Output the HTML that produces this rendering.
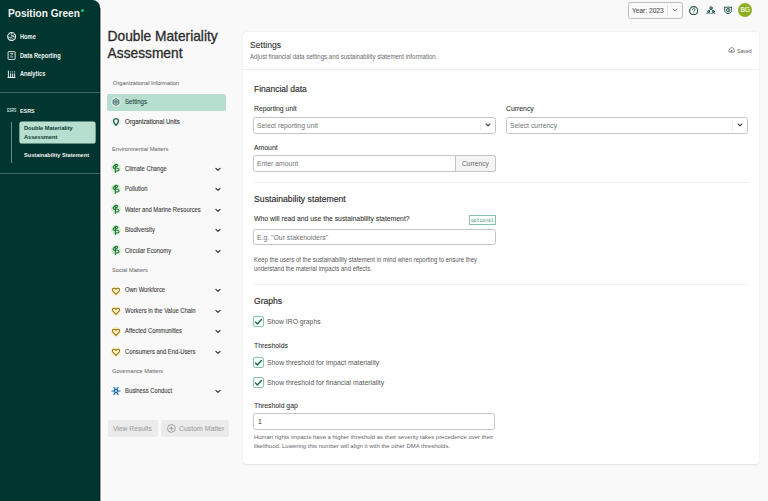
<!DOCTYPE html>
<html><head><meta charset="utf-8"><title>Double Materiality Assessment</title>
<style>
html,body{margin:0;padding:0;}
body{width:768px;height:501px;overflow:hidden;background:#f9f9f9;position:relative;font-family:"Liberation Sans", sans-serif;}
.t{position:absolute;line-height:1;white-space:nowrap;}
.r{position:absolute;display:block;}
</style></head><body>
<div class="r" style="left:0.00px;top:0.00px;width:102.20px;height:501.00px;background:#ffffff;border-top-right-radius:9px;"></div>
<div class="r" style="left:0.00px;top:0.00px;width:100.00px;height:501.00px;background:#01352f;border-top-right-radius:7.5px;"></div>
<div class="r" style="left:99.40px;top:7.50px;width:0.60px;height:493.50px;background:#00251f;"></div>
<div class="r" style="left:100.00px;top:7.50px;width:1.30px;height:493.50px;background:linear-gradient(90deg,#1f4a45,#ffffff);"></div>
<div class="t" style="left:7.80px;top:8.07px;font-size:10.899px;color:#f4f6f5;font-weight:bold;transform:scaleX(0.9285);transform-origin:0 0;">Position Green</div>
<div class="r" style="left:81px;top:8.8px;width:3px;height:3px;border-radius:50%;background:#10c07c"></div>
<svg class="r" style="left:6.90px;top:31.80px;width:9.2px;height:9.2px" viewBox="0 0 9.2 9.2"><g fill="none" stroke="#e6ecea" stroke-linecap="round"><circle cx="4.6" cy="4.6" r="4.0" stroke-width="1.05"/><path d="M5.2 1.0 C3.6 1.8 3.6 3.6 5.0 3.7 C5.8 3.8 6.4 3.2 7.4 2.6" stroke-width="1.0"/><path d="M1.0 4.6 C2.2 5.8 3.6 6.0 4.6 5.2 C5.6 4.4 6.6 4.4 8.0 5.0" stroke-width="1.0"/><path d="M2.8 7.2 C3.6 6.6 4.4 7.4 5.0 6.9 C5.6 6.4 6.2 6.8 6.6 7.2" stroke-width="0.75"/></g></svg>
<div class="t" style="left:20.00px;top:33.90px;font-size:6.384px;color:#eef2f1;font-weight:bold;transform:scaleX(0.8929);transform-origin:0 0;">Home</div>
<svg class="r" style="left:7.00px;top:50.80px;width:9px;height:9px" viewBox="0 0 9 9"><rect x="1.1" y="0.6" width="7" height="8" rx="0.6" fill="none" stroke="#e8eeec" stroke-width="0.95"/><path d="M3.2 2.6 H6 L4 4.6 V6.8 M5.6 5.4 V6.8" fill="none" stroke="#e8eeec" stroke-width="0.8"/></svg>
<div class="t" style="left:20.00px;top:52.50px;font-size:6.384px;color:#eef2f1;font-weight:bold;transform:scaleX(0.8929);transform-origin:0 0;">Data Reporting</div>
<svg class="r" style="left:7.00px;top:69.60px;width:9px;height:8px" viewBox="0 0 9 8"><path d="M0.5 7.5 H8.5 M1.4 0.6 V7 M3.6 3.4 V7 M5.6 3.4 V7 M7.6 3.4 V7 M3.6 1.4 V2.4 M5.6 1.4 V2.4 M7.6 1.4 V2.4" fill="none" stroke="#e8eeec" stroke-width="1"/></svg>
<div class="t" style="left:20.00px;top:71.20px;font-size:6.384px;color:#eef2f1;font-weight:bold;transform:scaleX(0.8929);transform-origin:0 0;">Analytics</div>
<div class="r" style="left:0.00px;top:92.00px;width:100.30px;height:0.90px;background:#3f6762;"></div>
<div class="t" style="left:6.80px;top:107.71px;font-size:5.900px;color:#dfe7e5;font-weight:normal;-webkit-text-stroke:0.1px #dfe7e5;transform:scaleX(0.58);transform-origin:0 0;">ESRS</div>
<div class="t" style="left:20.00px;top:108.18px;font-size:6.048px;color:#eef2f1;font-weight:bold;transform:scaleX(0.8929);transform-origin:0 0;">ESRS</div>
<div class="r" style="left:11.00px;top:121.50px;width:1.00px;height:41.00px;background:#6a8a86;"></div>
<div class="r" style="left:20.40px;top:122.00px;width:74.50px;height:21.40px;background:#b7dfd0;border-radius:2px;box-shadow:0 0 0 0.6px #c3e9da;"></div>
<div class="t" style="left:24.00px;top:124.82px;font-size:6.237px;color:#0f3a34;font-weight:bold;transform:scaleX(0.9091);transform-origin:0 0;">Double Materiality</div>
<div class="t" style="left:24.00px;top:133.82px;font-size:6.237px;color:#0f3a34;font-weight:bold;transform:scaleX(0.9091);transform-origin:0 0;">Assessment</div>
<div class="t" style="left:24.00px;top:151.89px;font-size:6.160px;color:#eef2f1;font-weight:bold;transform:scaleX(0.9091);transform-origin:0 0;">Sustainability Statement</div>
<div class="r" style="left:0.00px;top:172.90px;width:100.30px;height:0.90px;background:#3f6762;"></div>
<div class="t" style="left:107.60px;top:29.96px;font-size:13.750px;color:#2b2b2b;font-weight:normal;-webkit-text-stroke:0.3px #2b2b2b;">Double Materiality</div>
<div class="t" style="left:107.60px;top:46.96px;font-size:13.750px;color:#2b2b2b;font-weight:normal;-webkit-text-stroke:0.3px #2b2b2b;">Assessment</div>
<div class="t" style="left:112.60px;top:79.53px;font-size:6.102px;color:#7b7b7b;font-weight:normal;-webkit-text-stroke:0.1px #7b7b7b;transform:scaleX(0.9259);transform-origin:0 0;">Organizational Information</div>
<div class="r" style="left:107.40px;top:94.00px;width:118.50px;height:16.70px;background:#b7dfd0;border-radius:2px;"></div>
<svg class="r" style="left:110.70px;top:97.30px;width:10px;height:10px" viewBox="0 0 10 10"><circle cx="5" cy="5" r="4.9" fill="#d3ede3"/><g fill="none" stroke="#1b4640" stroke-width="0.85" stroke-linejoin="round"><path d="M5.00 1.60 L6.35 2.66 L7.94 3.30 L7.70 5.00 L7.94 6.70 L6.35 7.34 L5.00 8.40 L3.65 7.34 L2.06 6.70 L2.30 5.00 L2.06 3.30 L3.65 2.66 Z"/><circle cx="5" cy="5" r="1.25"/></g></svg>
<div class="t" style="left:124.50px;top:99.38px;font-size:6.405px;color:#21433c;font-weight:normal;-webkit-text-stroke:0.08px #21433c;transform:scaleX(0.9524);transform-origin:0 0;">Settings</div>
<svg class="r" style="left:110.70px;top:117.30px;width:10px;height:10px" viewBox="0 0 10 10"><circle cx="5" cy="5" r="4.9" fill="#e0f1ea"/><path d="M5 8.3 C4.2 7.4 2.5 5.6 2.5 4.1 C2.5 2.6 3.6 1.7 5 1.7 C6.4 1.7 7.5 2.6 7.5 4.1 C7.5 5.6 5.8 7.4 5 8.3 Z" fill="none" stroke="#1b4640" stroke-width="1.1" stroke-linejoin="round"/></svg>
<div class="t" style="left:124.50px;top:119.48px;font-size:6.405px;color:#3a3a3a;font-weight:normal;-webkit-text-stroke:0.13px #3a3a3a;transform:scaleX(0.9524);transform-origin:0 0;">Organizational Units</div>
<div class="t" style="left:112.40px;top:146.23px;font-size:6.102px;color:#7b7b7b;font-weight:normal;-webkit-text-stroke:0.1px #7b7b7b;transform:scaleX(0.9259);transform-origin:0 0;">Environmental Matters</div>
<svg class="r" style="left:110.70px;top:163.40px;width:10px;height:10px" viewBox="0 0 10 10"><circle cx="5" cy="5" r="4.9" fill="#d8f1d3"/><g fill="none" stroke="#247a3d" stroke-width="1.15" stroke-linecap="round"><path d="M4.4 1.3 V9.4"/><path d="M4.4 1.5 C5.8 1.0 6.9 1.6 6.7 2.6 C6.5 3.4 5.4 3.4 4.4 3.2"/><path d="M4.4 2.4 C3.0 2.4 2.1 3.2 2.2 4.2 C2.3 5.2 3.3 5.6 4.4 5.3"/><path d="M4.4 5.1 C6.2 4.8 7.8 5.2 7.9 6.5 C8.0 7.8 6.2 8.2 4.4 7.9"/></g></svg>
<div class="t" style="left:124.50px;top:165.95px;font-size:6.435px;color:#3f3f3f;font-weight:normal;-webkit-text-stroke:0.1px #3f3f3f;transform:scaleX(0.9091);transform-origin:0 0;">Climate Change</div>
<svg class="r" style="left:214.60px;top:166.90px;width:6px;height:5px" viewBox="0 0 6 5"><path d="M0.9 1.3 L3 3.4 L5.1 1.3" fill="none" stroke="#333" stroke-width="1.15" stroke-linecap="round" stroke-linejoin="round"/></svg>
<svg class="r" style="left:110.70px;top:183.90px;width:10px;height:10px" viewBox="0 0 10 10"><circle cx="5" cy="5" r="4.9" fill="#d8f1d3"/><g fill="none" stroke="#247a3d" stroke-width="1.15" stroke-linecap="round"><path d="M4.4 1.3 V9.4"/><path d="M4.4 1.5 C5.8 1.0 6.9 1.6 6.7 2.6 C6.5 3.4 5.4 3.4 4.4 3.2"/><path d="M4.4 2.4 C3.0 2.4 2.1 3.2 2.2 4.2 C2.3 5.2 3.3 5.6 4.4 5.3"/><path d="M4.4 5.1 C6.2 4.8 7.8 5.2 7.9 6.5 C8.0 7.8 6.2 8.2 4.4 7.9"/></g></svg>
<div class="t" style="left:124.50px;top:186.45px;font-size:6.435px;color:#3f3f3f;font-weight:normal;-webkit-text-stroke:0.1px #3f3f3f;transform:scaleX(0.9091);transform-origin:0 0;">Pollution</div>
<svg class="r" style="left:214.60px;top:187.40px;width:6px;height:5px" viewBox="0 0 6 5"><path d="M0.9 1.3 L3 3.4 L5.1 1.3" fill="none" stroke="#333" stroke-width="1.15" stroke-linecap="round" stroke-linejoin="round"/></svg>
<svg class="r" style="left:110.70px;top:204.40px;width:10px;height:10px" viewBox="0 0 10 10"><circle cx="5" cy="5" r="4.9" fill="#d8f1d3"/><g fill="none" stroke="#247a3d" stroke-width="1.15" stroke-linecap="round"><path d="M4.4 1.3 V9.4"/><path d="M4.4 1.5 C5.8 1.0 6.9 1.6 6.7 2.6 C6.5 3.4 5.4 3.4 4.4 3.2"/><path d="M4.4 2.4 C3.0 2.4 2.1 3.2 2.2 4.2 C2.3 5.2 3.3 5.6 4.4 5.3"/><path d="M4.4 5.1 C6.2 4.8 7.8 5.2 7.9 6.5 C8.0 7.8 6.2 8.2 4.4 7.9"/></g></svg>
<div class="t" style="left:124.50px;top:206.95px;font-size:6.435px;color:#3f3f3f;font-weight:normal;-webkit-text-stroke:0.1px #3f3f3f;transform:scaleX(0.9091);transform-origin:0 0;">Water and Marine Resources</div>
<svg class="r" style="left:214.60px;top:207.90px;width:6px;height:5px" viewBox="0 0 6 5"><path d="M0.9 1.3 L3 3.4 L5.1 1.3" fill="none" stroke="#333" stroke-width="1.15" stroke-linecap="round" stroke-linejoin="round"/></svg>
<svg class="r" style="left:110.70px;top:224.90px;width:10px;height:10px" viewBox="0 0 10 10"><circle cx="5" cy="5" r="4.9" fill="#d8f1d3"/><g fill="none" stroke="#247a3d" stroke-width="1.15" stroke-linecap="round"><path d="M4.4 1.3 V9.4"/><path d="M4.4 1.5 C5.8 1.0 6.9 1.6 6.7 2.6 C6.5 3.4 5.4 3.4 4.4 3.2"/><path d="M4.4 2.4 C3.0 2.4 2.1 3.2 2.2 4.2 C2.3 5.2 3.3 5.6 4.4 5.3"/><path d="M4.4 5.1 C6.2 4.8 7.8 5.2 7.9 6.5 C8.0 7.8 6.2 8.2 4.4 7.9"/></g></svg>
<div class="t" style="left:124.50px;top:227.45px;font-size:6.435px;color:#3f3f3f;font-weight:normal;-webkit-text-stroke:0.1px #3f3f3f;transform:scaleX(0.9091);transform-origin:0 0;">Biodiversity</div>
<svg class="r" style="left:214.60px;top:228.40px;width:6px;height:5px" viewBox="0 0 6 5"><path d="M0.9 1.3 L3 3.4 L5.1 1.3" fill="none" stroke="#333" stroke-width="1.15" stroke-linecap="round" stroke-linejoin="round"/></svg>
<svg class="r" style="left:110.70px;top:245.40px;width:10px;height:10px" viewBox="0 0 10 10"><circle cx="5" cy="5" r="4.9" fill="#d8f1d3"/><g fill="none" stroke="#247a3d" stroke-width="1.15" stroke-linecap="round"><path d="M4.4 1.3 V9.4"/><path d="M4.4 1.5 C5.8 1.0 6.9 1.6 6.7 2.6 C6.5 3.4 5.4 3.4 4.4 3.2"/><path d="M4.4 2.4 C3.0 2.4 2.1 3.2 2.2 4.2 C2.3 5.2 3.3 5.6 4.4 5.3"/><path d="M4.4 5.1 C6.2 4.8 7.8 5.2 7.9 6.5 C8.0 7.8 6.2 8.2 4.4 7.9"/></g></svg>
<div class="t" style="left:124.50px;top:247.95px;font-size:6.435px;color:#3f3f3f;font-weight:normal;-webkit-text-stroke:0.1px #3f3f3f;transform:scaleX(0.9091);transform-origin:0 0;">Circular Economy</div>
<svg class="r" style="left:214.60px;top:248.90px;width:6px;height:5px" viewBox="0 0 6 5"><path d="M0.9 1.3 L3 3.4 L5.1 1.3" fill="none" stroke="#333" stroke-width="1.15" stroke-linecap="round" stroke-linejoin="round"/></svg>
<div class="t" style="left:112.40px;top:267.43px;font-size:6.102px;color:#7b7b7b;font-weight:normal;-webkit-text-stroke:0.1px #7b7b7b;transform:scaleX(0.9259);transform-origin:0 0;">Social Matters</div>
<svg class="r" style="left:110.70px;top:285.50px;width:10px;height:10px" viewBox="0 0 10 10"><circle cx="5" cy="5" r="4.9" fill="#fbf1c8"/><path d="M5 8.4 L1.9 5.2 C0.9 4.1 1.4 2.2 3.0 2.2 C3.9 2.2 4.6 2.8 5 3.4 C5.4 2.8 6.1 2.2 7.0 2.2 C8.6 2.2 9.1 4.1 8.1 5.2 Z" fill="none" stroke="#9a7414" stroke-width="1.05" stroke-linejoin="round"/></svg>
<div class="t" style="left:124.50px;top:287.05px;font-size:6.435px;color:#3f3f3f;font-weight:normal;-webkit-text-stroke:0.1px #3f3f3f;transform:scaleX(0.9091);transform-origin:0 0;">Own Workforce</div>
<svg class="r" style="left:214.60px;top:288.00px;width:6px;height:5px" viewBox="0 0 6 5"><path d="M0.9 1.3 L3 3.4 L5.1 1.3" fill="none" stroke="#333" stroke-width="1.15" stroke-linecap="round" stroke-linejoin="round"/></svg>
<svg class="r" style="left:110.70px;top:306.10px;width:10px;height:10px" viewBox="0 0 10 10"><circle cx="5" cy="5" r="4.9" fill="#fbf1c8"/><path d="M5 8.4 L1.9 5.2 C0.9 4.1 1.4 2.2 3.0 2.2 C3.9 2.2 4.6 2.8 5 3.4 C5.4 2.8 6.1 2.2 7.0 2.2 C8.6 2.2 9.1 4.1 8.1 5.2 Z" fill="none" stroke="#9a7414" stroke-width="1.05" stroke-linejoin="round"/></svg>
<div class="t" style="left:124.50px;top:307.65px;font-size:6.435px;color:#3f3f3f;font-weight:normal;-webkit-text-stroke:0.1px #3f3f3f;transform:scaleX(0.9091);transform-origin:0 0;">Workers in the Value Chain</div>
<svg class="r" style="left:214.60px;top:308.60px;width:6px;height:5px" viewBox="0 0 6 5"><path d="M0.9 1.3 L3 3.4 L5.1 1.3" fill="none" stroke="#333" stroke-width="1.15" stroke-linecap="round" stroke-linejoin="round"/></svg>
<svg class="r" style="left:110.70px;top:326.60px;width:10px;height:10px" viewBox="0 0 10 10"><circle cx="5" cy="5" r="4.9" fill="#fbf1c8"/><path d="M5 8.4 L1.9 5.2 C0.9 4.1 1.4 2.2 3.0 2.2 C3.9 2.2 4.6 2.8 5 3.4 C5.4 2.8 6.1 2.2 7.0 2.2 C8.6 2.2 9.1 4.1 8.1 5.2 Z" fill="none" stroke="#9a7414" stroke-width="1.05" stroke-linejoin="round"/></svg>
<div class="t" style="left:124.50px;top:328.15px;font-size:6.435px;color:#3f3f3f;font-weight:normal;-webkit-text-stroke:0.1px #3f3f3f;transform:scaleX(0.9091);transform-origin:0 0;">Affected Communities</div>
<svg class="r" style="left:214.60px;top:329.10px;width:6px;height:5px" viewBox="0 0 6 5"><path d="M0.9 1.3 L3 3.4 L5.1 1.3" fill="none" stroke="#333" stroke-width="1.15" stroke-linecap="round" stroke-linejoin="round"/></svg>
<svg class="r" style="left:110.70px;top:347.00px;width:10px;height:10px" viewBox="0 0 10 10"><circle cx="5" cy="5" r="4.9" fill="#fbf1c8"/><path d="M5 8.4 L1.9 5.2 C0.9 4.1 1.4 2.2 3.0 2.2 C3.9 2.2 4.6 2.8 5 3.4 C5.4 2.8 6.1 2.2 7.0 2.2 C8.6 2.2 9.1 4.1 8.1 5.2 Z" fill="none" stroke="#9a7414" stroke-width="1.05" stroke-linejoin="round"/></svg>
<div class="t" style="left:124.50px;top:348.55px;font-size:6.435px;color:#3f3f3f;font-weight:normal;-webkit-text-stroke:0.1px #3f3f3f;transform:scaleX(0.9091);transform-origin:0 0;">Consumers and End-Users</div>
<svg class="r" style="left:214.60px;top:349.50px;width:6px;height:5px" viewBox="0 0 6 5"><path d="M0.9 1.3 L3 3.4 L5.1 1.3" fill="none" stroke="#333" stroke-width="1.15" stroke-linecap="round" stroke-linejoin="round"/></svg>
<div class="t" style="left:112.40px;top:367.83px;font-size:6.102px;color:#7b7b7b;font-weight:normal;-webkit-text-stroke:0.1px #7b7b7b;transform:scaleX(0.9259);transform-origin:0 0;">Governance Matters</div>
<svg class="r" style="left:110.80px;top:386.10px;width:10px;height:10px" viewBox="0 0 10 10"><circle cx="5" cy="5" r="4.9" fill="#e8f1f8"/><g stroke="#1f67a6" stroke-width="1.2" fill="none" stroke-linecap="round"><path d="M6.70 5.00 L9.00 5.00 M5.85 6.47 L7.00 8.46 M4.15 6.47 L3.00 8.46 M3.30 5.00 L1.00 5.00 M4.15 3.53 L3.00 1.54 M5.85 3.53 L7.00 1.54"/><circle cx="5" cy="5" r="1.55"/></g></svg>
<div class="t" style="left:124.50px;top:387.95px;font-size:6.435px;color:#3f3f3f;font-weight:normal;-webkit-text-stroke:0.1px #3f3f3f;transform:scaleX(0.9091);transform-origin:0 0;">Business Conduct</div>
<svg class="r" style="left:214.60px;top:388.90px;width:6px;height:5px" viewBox="0 0 6 5"><path d="M0.9 1.3 L3 3.4 L5.1 1.3" fill="none" stroke="#333" stroke-width="1.15" stroke-linecap="round" stroke-linejoin="round"/></svg>
<div class="r" style="left:107.50px;top:420.20px;width:50.40px;height:16.70px;background:#ebebeb;border-radius:2px;"></div>
<div class="t" style="left:113.00px;top:426.20px;font-size:7.088px;color:#a0a0a0;font-weight:normal;-webkit-text-stroke:0.08px #a0a0a0;transform:scaleX(0.9524);transform-origin:0 0;">View Results</div>
<div class="r" style="left:161.30px;top:420.20px;width:68.10px;height:16.70px;background:#ebebeb;border-radius:2px;"></div>
<svg class="r" style="left:166.80px;top:424.20px;width:8.8px;height:8.8px" viewBox="0 0 8.8 8.8"><circle cx="4.4" cy="4.4" r="3.9" fill="none" stroke="#959595" stroke-width="0.9"/><path d="M4.4 2.3 V6.5 M2.3 4.4 H6.5" stroke="#959595" stroke-width="0.9"/></svg>
<div class="t" style="left:178.60px;top:425.47px;font-size:7.245px;color:#a0a0a0;font-weight:normal;-webkit-text-stroke:0.08px #a0a0a0;transform:scaleX(0.9524);transform-origin:0 0;">Custom Matter</div>
<div class="r" style="left:628.30px;top:2.10px;width:55.20px;height:16.65px;border:0.9px solid #bdbdbd;border-radius:2.5px;background:#f9f9f9;box-sizing:border-box;"></div>
<div class="t" style="left:631.70px;top:7.63px;font-size:6.930px;color:#555;font-weight:normal;-webkit-text-stroke:0.1px #555;transform:scaleX(0.9524);transform-origin:0 0;">Year: 2023</div>
<div class="r" style="left:667.40px;top:4.80px;width:0.70px;height:11.20px;background:#e2e2e2;"></div>
<svg class="r" style="left:672.20px;top:8.00px;width:6px;height:4px" viewBox="0 0 6 4"><path d="M1.1 1.0 L3 2.9 L4.9 1.0" fill="none" stroke="#666" stroke-width="0.9" stroke-linecap="round" stroke-linejoin="round"/></svg>
<svg class="r" style="left:688.90px;top:5.70px;width:9.4px;height:9.4px" viewBox="0 0 9.4 9.4"><circle cx="4.7" cy="4.7" r="4.05" fill="none" stroke="#1f5049" stroke-width="1.15"/><path d="M3.3 3.7 C3.3 2.3 6.1 2.3 6.1 3.7 C6.1 4.7 4.7 4.6 4.7 5.7" fill="none" stroke="#1f5049" stroke-width="1.0"/><circle cx="4.7" cy="7.0" r="0.6" fill="#1f5049"/></svg>
<svg class="r" style="left:705.60px;top:5.60px;width:10px;height:8.6px" viewBox="0 0 10 8.6"><g fill="none" stroke="#1f5049" stroke-width="1.0" stroke-linejoin="round" stroke-linecap="round"><circle cx="5" cy="2.0" r="1.25"/><path d="M2.4 5.2 L5 3.2 L7.6 5.2"/><circle cx="2.6" cy="5.5" r="1.05"/><circle cx="7.4" cy="5.5" r="1.05"/><path d="M0.7 8.2 C0.7 7.2 1.5 6.8 2.6 6.8 C3.7 6.8 4.5 7.2 4.5 8.2 M5.5 8.2 C5.5 7.2 6.3 6.8 7.4 6.8 C8.5 6.8 9.3 7.2 9.3 8.2"/></g></svg>
<svg class="r" style="left:723.80px;top:5.90px;width:8.4px;height:8.2px" viewBox="0 0 8.4 8.2"><g fill="none" stroke="#1f5049" stroke-width="1.0" stroke-linejoin="round"><path d="M0.7 0.9 L2.3 1.5 C3.5 0.9 4.9 0.9 6.1 1.5 L7.7 0.9 V4.3 C7.7 6.0 6.2 7.2 4.2 7.7 C2.2 7.2 0.7 6.0 0.7 4.3 Z"/><circle cx="4.2" cy="4.2" r="1.75" stroke-width="0.9"/><path d="M4.2 2.5 V5.9" stroke-width="0.8"/></g></svg>
<div class="r" style="left:738px;top:3.1px;width:14.1px;height:14.1px;border-radius:50%;background:#8fae24"></div>
<div class="t" style="left:740.50px;top:6.91px;font-size:6.600px;color:#f6f9ec;font-weight:normal;letter-spacing:-0.15px;-webkit-text-stroke:0.15px #f6f9ec;">BG</div>
<div class="r" style="left:243.40px;top:32.20px;width:515.60px;height:431.50px;background:#fff;border-radius:3.5px;box-shadow:0 0.5px 2px rgba(0,0,0,0.10);"></div>
<div class="t" style="left:250.30px;top:40.76px;font-size:9.030px;color:#262626;font-weight:normal;-webkit-text-stroke:0.06px #262626;transform:scaleX(0.9524);transform-origin:0 0;">Settings</div>
<div class="t" style="left:250.30px;top:54.18px;font-size:6.405px;color:#6b6b6b;font-weight:normal;transform:scaleX(0.9524);transform-origin:0 0;">Adjust financial data settings and sustainability statement information.</div>
<svg class="r" style="left:727.80px;top:47.40px;width:7.4px;height:5.8px" viewBox="0 0 7.4 5.8"><path d="M2.6 5.1 H1.9 C0.7 5.1 0.4 3.5 1.4 3.1 C1.5 1.6 2.6 0.7 3.8 0.7 C5.0 0.7 5.8 1.6 5.9 2.7 C6.9 2.8 7.1 4.0 6.6 4.6 C6.4 4.9 6.1 5.1 5.6 5.1 H4.8 M3.7 5.6 V3.3 M2.8 4.2 L3.7 3.3 L4.6 4.2" fill="none" stroke="#6a6a6a" stroke-width="0.8" stroke-linejoin="round" stroke-linecap="round"/></svg>
<div class="t" style="left:737.00px;top:48.73px;font-size:5.750px;color:#6a6a6a;font-weight:normal;-webkit-text-stroke:0.05px #6a6a6a;transform:scaleX(0.9);transform-origin:0 0;">Saved</div>
<div class="r" style="left:243.40px;top:68.50px;width:515.60px;height:1.00px;background:#efefef;"></div>
<div class="t" style="left:254.00px;top:84.54px;font-size:8.925px;color:#2a2a2a;font-weight:normal;-webkit-text-stroke:0.15px #2a2a2a;transform:scaleX(0.9524);transform-origin:0 0;">Financial data</div>
<div class="t" style="left:254.00px;top:105.21px;font-size:7.192px;color:#2f2f2f;font-weight:normal;-webkit-text-stroke:0.07px #2f2f2f;transform:scaleX(0.9524);transform-origin:0 0;">Reporting unit</div>
<div class="t" style="left:506.30px;top:105.21px;font-size:7.192px;color:#2f2f2f;font-weight:normal;-webkit-text-stroke:0.07px #2f2f2f;transform:scaleX(0.9524);transform-origin:0 0;">Currency</div>
<div class="r" style="left:253.40px;top:117.20px;width:242.20px;height:16.60px;border:0.9px solid #c4c4c4;border-radius:2.5px;box-sizing:border-box;"></div>
<div class="t" style="left:257.20px;top:121.81px;font-size:7.192px;color:#727272;font-weight:normal;transform:scaleX(0.9524);transform-origin:0 0;">Select reporting unit</div>
<div class="r" style="left:480.10px;top:119.80px;width:0.60px;height:11.20px;background:#ececec;"></div>
<svg class="r" style="left:485.00px;top:123.00px;width:6px;height:4px" viewBox="0 0 6 4"><path d="M1.1 1.0 L3 2.9 L4.9 1.0" fill="none" stroke="#444" stroke-width="1.15" stroke-linecap="round" stroke-linejoin="round"/></svg>
<div class="r" style="left:506.30px;top:117.20px;width:242.20px;height:16.60px;border:0.9px solid #c4c4c4;border-radius:2.5px;box-sizing:border-box;"></div>
<div class="t" style="left:510.00px;top:121.81px;font-size:7.192px;color:#727272;font-weight:normal;transform:scaleX(0.9524);transform-origin:0 0;">Select currency</div>
<div class="r" style="left:732.30px;top:119.80px;width:0.60px;height:11.20px;background:#ececec;"></div>
<svg class="r" style="left:737.00px;top:123.00px;width:6px;height:4px" viewBox="0 0 6 4"><path d="M1.1 1.0 L3 2.9 L4.9 1.0" fill="none" stroke="#444" stroke-width="1.15" stroke-linecap="round" stroke-linejoin="round"/></svg>
<div class="t" style="left:254.00px;top:143.51px;font-size:7.192px;color:#2f2f2f;font-weight:normal;-webkit-text-stroke:0.07px #2f2f2f;transform:scaleX(0.9524);transform-origin:0 0;">Amount</div>
<div class="r" style="left:253.40px;top:155.10px;width:242.20px;height:17.10px;border:0.9px solid #c4c4c4;border-radius:2.5px;box-sizing:border-box;"></div>
<div class="r" style="left:454.60px;top:155.10px;width:41.00px;height:17.10px;background:#f4f4f4;border:0.9px solid #c4c4c4;border-radius:0 2.5px 2.5px 0;box-sizing:border-box;"></div>
<div class="t" style="left:257.20px;top:160.31px;font-size:7.192px;color:#727272;font-weight:normal;transform:scaleX(0.9524);transform-origin:0 0;">Enter amount</div>
<div class="t" style="left:462.00px;top:161.33px;font-size:6.930px;color:#666;font-weight:normal;transform:scaleX(0.9524);transform-origin:0 0;">Currency</div>
<div class="r" style="left:253.50px;top:181.50px;width:495.00px;height:1.00px;background:#efefef;"></div>
<div class="t" style="left:254.00px;top:195.17px;font-size:9.135px;color:#2a2a2a;font-weight:normal;-webkit-text-stroke:0.15px #2a2a2a;transform:scaleX(0.9524);transform-origin:0 0;">Sustainability statement</div>
<div class="t" style="left:254.00px;top:214.71px;font-size:7.192px;color:#2f2f2f;font-weight:normal;-webkit-text-stroke:0.07px #2f2f2f;transform:scaleX(0.9524);transform-origin:0 0;">Who will read and use the sustainability statement?</div>
<div class="r" style="left:468.90px;top:215.10px;width:26.90px;height:9.80px;border:0.8px solid #86c2a9;border-radius:0.3px;box-sizing:border-box;"></div>
<div class="t" style="left:471.10px;top:217.86px;font-size:5.600px;color:#4f9f80;font-weight:normal;letter-spacing:0.18px;-webkit-text-stroke:0.04px #4f9f80;font-family:'Liberation Mono', monospace;transform:scaleX(0.8);transform-origin:0 0;">optional</div>
<div class="r" style="left:253.40px;top:228.90px;width:242.20px;height:16.60px;border:0.9px solid #c4c4c4;border-radius:2.5px;box-sizing:border-box;"></div>
<div class="t" style="left:257.20px;top:233.91px;font-size:7.192px;color:#727272;font-weight:normal;transform:scaleX(0.9524);transform-origin:0 0;">E.g. "Our stakeholders"</div>
<div class="t" style="left:254.00px;top:257.17px;font-size:6.300px;color:#555;font-weight:normal;transform:scaleX(0.9524);transform-origin:0 0;">Keep the users of the sustainability statement in mind when reporting to ensure they</div>
<div class="t" style="left:254.00px;top:265.97px;font-size:6.300px;color:#555;font-weight:normal;transform:scaleX(0.9524);transform-origin:0 0;">understand the material impacts and effects.</div>
<div class="r" style="left:253.50px;top:284.00px;width:495.00px;height:1.00px;background:#efefef;"></div>
<div class="t" style="left:254.00px;top:296.56px;font-size:9.030px;color:#2a2a2a;font-weight:normal;-webkit-text-stroke:0.15px #2a2a2a;transform:scaleX(0.9524);transform-origin:0 0;">Graphs</div>
<div class="r" style="left:253.1px;top:316.4px;width:10.9px;height:11px;border:1.1px solid #86c4ab;border-radius:2px;box-sizing:border-box;background:#fff"></div>
<svg class="r" style="left:253.10px;top:316.40px;width:10.9px;height:11px" viewBox="0 0 10.9 11"><path d="M2.5 6.0 L4.4 7.9 L8.4 3.4" fill="none" stroke="#1b6b49" stroke-width="1.45" stroke-linecap="round" stroke-linejoin="round"/></svg>
<div class="t" style="left:267.30px;top:318.66px;font-size:7.140px;color:#555;font-weight:normal;transform:scaleX(0.9524);transform-origin:0 0;">Show IRO graphs</div>
<div class="t" style="left:254.00px;top:342.11px;font-size:7.192px;color:#2f2f2f;font-weight:normal;-webkit-text-stroke:0.07px #2f2f2f;transform:scaleX(0.9524);transform-origin:0 0;">Thresholds</div>
<div class="r" style="left:253.1px;top:356.7px;width:10.9px;height:11px;border:1.1px solid #86c4ab;border-radius:2px;box-sizing:border-box;background:#fff"></div>
<svg class="r" style="left:253.10px;top:356.70px;width:10.9px;height:11px" viewBox="0 0 10.9 11"><path d="M2.5 6.0 L4.4 7.9 L8.4 3.4" fill="none" stroke="#1b6b49" stroke-width="1.45" stroke-linecap="round" stroke-linejoin="round"/></svg>
<div class="t" style="left:267.30px;top:358.91px;font-size:7.192px;color:#555;font-weight:normal;transform:scaleX(0.9524);transform-origin:0 0;">Show threshold for impact materiality</div>
<div class="r" style="left:253.1px;top:376.9px;width:10.9px;height:11px;border:1.1px solid #86c4ab;border-radius:2px;box-sizing:border-box;background:#fff"></div>
<svg class="r" style="left:253.10px;top:376.90px;width:10.9px;height:11px" viewBox="0 0 10.9 11"><path d="M2.5 6.0 L4.4 7.9 L8.4 3.4" fill="none" stroke="#1b6b49" stroke-width="1.45" stroke-linecap="round" stroke-linejoin="round"/></svg>
<div class="t" style="left:267.30px;top:379.11px;font-size:7.192px;color:#555;font-weight:normal;transform:scaleX(0.9524);transform-origin:0 0;">Show threshold for financial materiality</div>
<div class="t" style="left:254.00px;top:401.61px;font-size:7.192px;color:#2f2f2f;font-weight:normal;-webkit-text-stroke:0.07px #2f2f2f;transform:scaleX(0.9524);transform-origin:0 0;">Threshold gap</div>
<div class="r" style="left:253.40px;top:413.00px;width:242.10px;height:16.70px;border:0.9px solid #c4c4c4;border-radius:2.5px;box-sizing:border-box;"></div>
<div class="t" style="left:257.50px;top:418.11px;font-size:7.192px;color:#333;font-weight:normal;transform:scaleX(0.9524);transform-origin:0 0;">1</div>
<div class="t" style="left:254.00px;top:434.01px;font-size:6.248px;color:#666;font-weight:normal;transform:scaleX(0.9524);transform-origin:0 0;">Human rights impacts have a higher threshold as their severity takes precedence over their</div>
<div class="t" style="left:254.00px;top:442.71px;font-size:6.248px;color:#666;font-weight:normal;transform:scaleX(0.9524);transform-origin:0 0;">likelihood. Lowering this number will align it with the other DMA thresholds.</div>
</body></html>
